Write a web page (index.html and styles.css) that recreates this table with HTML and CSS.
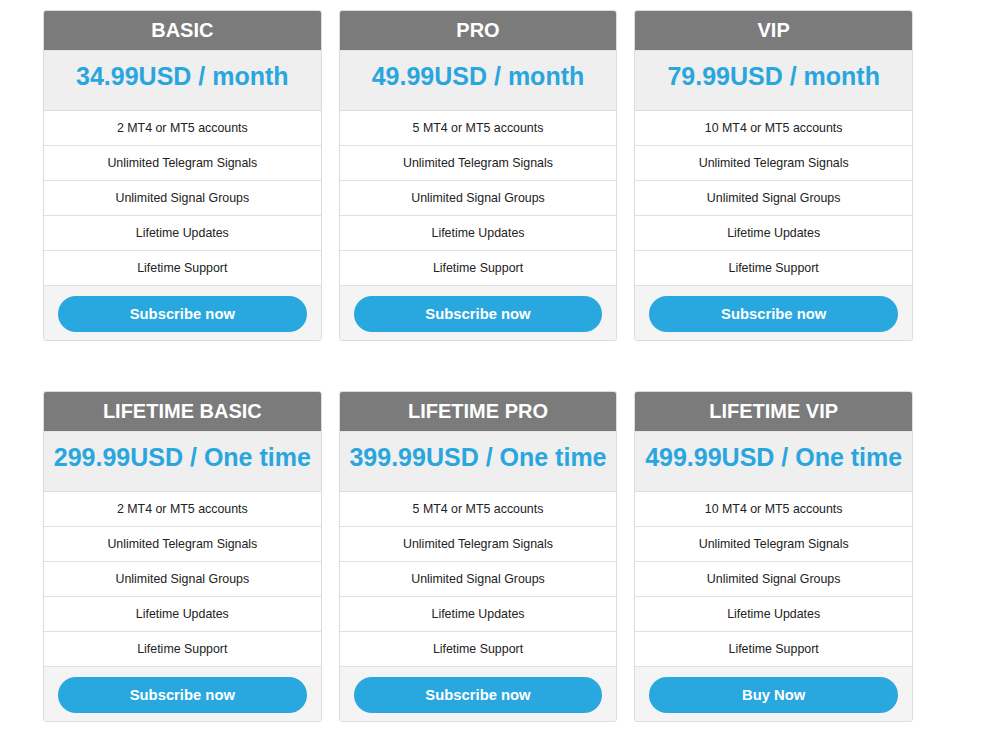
FILE: index.html
```html
<!DOCTYPE html>
<html>
<head>
<meta charset="utf-8">
<link rel="stylesheet" href="styles.css">
</head>
<body>
<div class="grid">
  <div class="card">
    <div class="card-head">BASIC</div>
    <div class="card-price">34.99USD / month</div>
    <ul class="features">
      <li>2 MT4 or MT5 accounts</li>
      <li>Unlimited Telegram Signals</li>
      <li>Unlimited Signal Groups</li>
      <li>Lifetime Updates</li>
      <li>Lifetime Support</li>
    </ul>
    <div class="card-foot"><a class="btn">Subscribe now</a></div>
  </div>
  <div class="card">
    <div class="card-head">PRO</div>
    <div class="card-price">49.99USD / month</div>
    <ul class="features">
      <li>5 MT4 or MT5 accounts</li>
      <li>Unlimited Telegram Signals</li>
      <li>Unlimited Signal Groups</li>
      <li>Lifetime Updates</li>
      <li>Lifetime Support</li>
    </ul>
    <div class="card-foot"><a class="btn">Subscribe now</a></div>
  </div>
  <div class="card">
    <div class="card-head">VIP</div>
    <div class="card-price">79.99USD / month</div>
    <ul class="features">
      <li>10 MT4 or MT5 accounts</li>
      <li>Unlimited Telegram Signals</li>
      <li>Unlimited Signal Groups</li>
      <li>Lifetime Updates</li>
      <li>Lifetime Support</li>
    </ul>
    <div class="card-foot"><a class="btn">Subscribe now</a></div>
  </div>
  <div class="card">
    <div class="card-head">LIFETIME BASIC</div>
    <div class="card-price">299.99USD / One time</div>
    <ul class="features">
      <li>2 MT4 or MT5 accounts</li>
      <li>Unlimited Telegram Signals</li>
      <li>Unlimited Signal Groups</li>
      <li>Lifetime Updates</li>
      <li>Lifetime Support</li>
    </ul>
    <div class="card-foot"><a class="btn">Subscribe now</a></div>
  </div>
  <div class="card">
    <div class="card-head">LIFETIME PRO</div>
    <div class="card-price">399.99USD / One time</div>
    <ul class="features">
      <li>5 MT4 or MT5 accounts</li>
      <li>Unlimited Telegram Signals</li>
      <li>Unlimited Signal Groups</li>
      <li>Lifetime Updates</li>
      <li>Lifetime Support</li>
    </ul>
    <div class="card-foot"><a class="btn">Subscribe now</a></div>
  </div>
  <div class="card">
    <div class="card-head">LIFETIME VIP</div>
    <div class="card-price">499.99USD / One time</div>
    <ul class="features">
      <li>10 MT4 or MT5 accounts</li>
      <li>Unlimited Telegram Signals</li>
      <li>Unlimited Signal Groups</li>
      <li>Lifetime Updates</li>
      <li>Lifetime Support</li>
    </ul>
    <div class="card-foot"><a class="btn">Buy Now</a></div>
  </div>
</div>
</body>
</html>
```
FILE: styles.css
```css
html, body {
  margin: 0;
  padding: 0;
  background: #fff;
}
body {
  font-family: "Liberation Sans", Arial, sans-serif;
  padding: 10px 0 0 43px;
}
.grid {
  width: 870px;
  display: grid;
  grid-template-columns: repeat(3, 1fr);
  column-gap: 17px;
  row-gap: 50px;
}
.card {
  border: 1px solid #dcdcdc;
  border-radius: 3px;
  overflow: hidden;
  background: #fff;
}
.card-head {
  height: 39px;
  background: #7b7b7b;
  color: #fff;
  font-weight: bold;
  font-size: 20px;
  display: flex;
  align-items: center;
  justify-content: center;
}
.card-price {
  height: 50px;
  padding-bottom: 9px;
  background: #efefef;
  border-top: 1px solid #e6e6e6;
  border-bottom: 1px solid #dcdcdc;
  color: #29a6de;
  font-weight: bold;
  font-size: 25px;
  display: flex;
  align-items: center;
  justify-content: center;
}
.features {
  list-style: none;
  margin: 0;
  padding: 0;
}
.features li {
  height: 34px;
  border-bottom: 1px solid #e1e1e1;
  display: flex;
  align-items: center;
  justify-content: center;
  font-size: 12.4px;
  color: #222;
}
.features li:nth-child(n+4) {
  padding-bottom: 1px;
  height: 33px;
}
.card-foot {
  background: #f4f4f4;
  padding: 10px 14px 8px;
}
.btn {
  display: flex;
  align-items: center;
  justify-content: center;
  height: 36px;
  box-sizing: border-box;
  border-radius: 18px;
  background: #29a7df;
  color: #fff;
  font-weight: bold;
  font-size: 14.8px;
  cursor: pointer;
}
```
